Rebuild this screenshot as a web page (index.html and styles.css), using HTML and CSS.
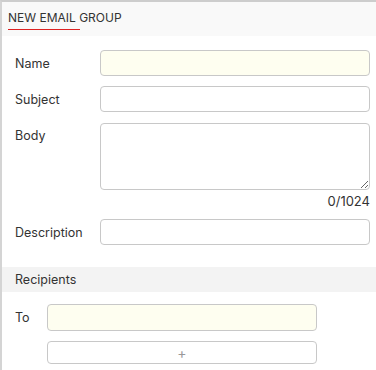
FILE: index.html
```html
<!DOCTYPE html>
<html lang="en">
<head>
    <meta charset="utf-8" />
    <title>New Email Group</title>
    <link rel="stylesheet" href="styles.css">
</head>
<body>
    <div class="panel">
        <div class="tabs">
            <span class="tab active">NEW EMAIL GROUP</span>
        </div>

        <div class="form">
            <div class="row">
                <label>Name</label>
                <input type="text" class="field required">
            </div>
            <div class="row">
                <label>Subject</label>
                <input type="text" class="field">
            </div>
            <div class="row top">
                <label>Body</label>
                <div class="body-wrap">
                    <textarea class="field area"></textarea>
                    <div class="counter">0/1024</div>
                </div>
            </div>
            <div class="row">
                <label>Description</label>
                <input type="text" class="field">
            </div>
        </div>

        <div class="section-title">Recipients</div>

        <div class="recipients">
            <div class="row short">
                <label>To</label>
                <input type="text" class="field required">
            </div>
            <div class="row short">
                <label></label>
                <button class="add-button">+</button>
            </div>
        </div>
    </div>
</body>
</html>
```

FILE: styles.css
```css
* {
    margin: 0;
    padding: 0;
    box-sizing: border-box;
}

body {
    font-family: Inter, "Liberation Sans", sans-serif;
    font-size: 12.5px;
    color: #333;
    background: #fff;
}

.panel {
    border-top: 2px solid #cdcdcd;
    border-left: 2px solid #d4d4d4;
    min-height: 370px;
}

.tabs {
    height: 34px;
    background: #f9f9f9;
    padding-left: 6px;
    display: flex;
    align-items: flex-start;
}

.tab {
    font-size: 12px;
    color: #333;
    padding-top: 8px;
    height: 28px;
}

.tab.active {
    border-bottom: 1px solid #d22;
    width: 72px;
    white-space: nowrap;
}

.form {
    padding: 14px 6px 22px 13px;
    display: flex;
    flex-direction: column;
    gap: 10px;
}

.row {
    display: flex;
    align-items: center;
}

.row.top {
    align-items: flex-start;
}

.row label {
    width: 85px;
    flex-shrink: 0;
}

.row.top label {
    padding-top: 6px;
}

.field {
    flex: 1;
    height: 26px;
    border: 1px solid #c8c8c8;
    border-radius: 4px;
    background: #fff;
    font-family: inherit;
    font-size: 13px;
    outline: none;
}

.field.required {
    background: #fefef0;
}

.body-wrap {
    flex: 1;
    display: flex;
    flex-direction: column;
    padding-top: 1px;
}

.area {
    flex: none;
    height: 67px;
    resize: vertical;
}

.counter {
    text-align: right;
    margin-top: 4px;
    line-height: 15px;
    font-size: 13px;
}

.section-title {
    background: #f3f3f3;
    height: 25px;
    line-height: 25px;
    padding-left: 13px;
}

.recipients {
    padding: 12px 6px 0 13px;
    display: flex;
    flex-direction: column;
    gap: 10px;
}

.row.short label {
    width: 32px;
}

.row.short .field,
.add-button {
    flex: 0 0 270px;
}

.row.short .field {
    height: 27px;
}

.add-button {
    height: 23px;
    border: 1px solid #c8c8c8;
    border-radius: 4px;
    background: #fff;
    color: #999;
    font-family: inherit;
    font-size: 14px;
}
```
